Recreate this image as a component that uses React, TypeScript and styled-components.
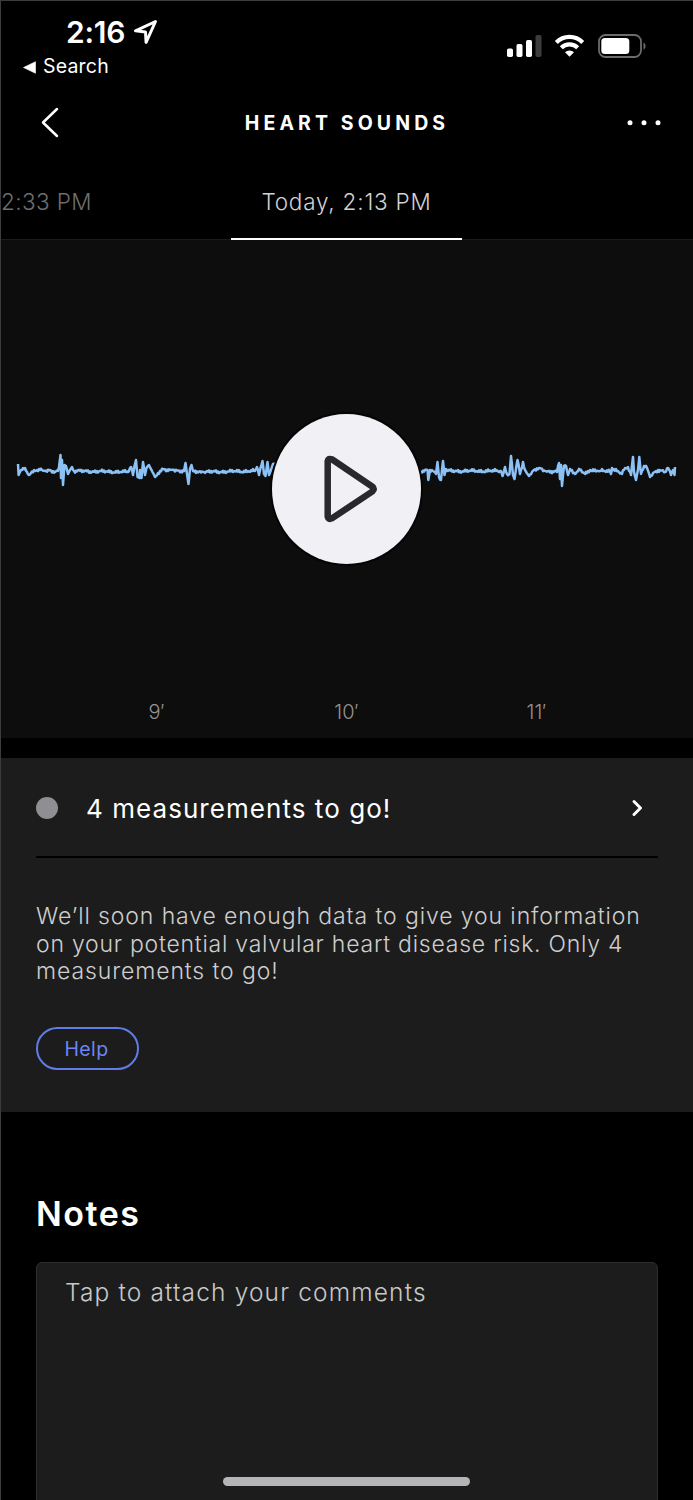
import React from "react";
import styled, { createGlobalStyle } from "styled-components";

const GlobalStyle = createGlobalStyle`
  * { box-sizing: border-box; }
  html, body { margin: 0; background: #000; }
  body { font-family: Inter, "Liberation Sans", sans-serif; overflow: hidden; }
  button { font: inherit; background: none; border: 0; padding: 0; cursor: pointer; }
`;

const Screen = styled.main`
  position: relative;
  width: 693px;
  height: 1500px;
  overflow: hidden;
  display: flex;
  flex-direction: column;
  background: #000;
  border-top: 1px solid #3c3c3c;
  border-left: 1px solid #3c3c3c;
  color: #fff;
`;

const Line = styled.span<{ $size: number; $weight?: number; $spacing?: number; $color?: string }>`
  display: block;
  margin: 0;
  white-space: nowrap;
  line-height: 1.2;
  font-size: ${(p) => p.$size}px;
  font-weight: ${(p) => p.$weight ?? 300};
  letter-spacing: ${(p) => p.$spacing ?? 0}px;
  color: ${(p) => p.$color ?? "#fff"};
`;

const StatusBar = styled.div`
  flex: none;
  height: 84px;
  display: flex;
  justify-content: space-between;
  padding: 13px 46px 0 22px;
`;

const Clock = styled.div`
  display: flex;
  align-items: center;
  gap: 8px;
  height: 36px;
  padding-left: 43px;
`;

const BackToApp = styled.div`
  display: flex;
  align-items: center;
  gap: 7px;
  height: 34px;
`;

const Indicators = styled.div`
  display: flex;
  height: 24px;
  margin-top: 20px;
`;

const Header = styled.header`
  flex: none;
  height: 76px;
  display: grid;
  grid-template-columns: 98px 1fr 98px;
  align-items: center;
  justify-items: center;
`;

const Title = styled(Line)`
  padding-top: 2px;
`;

const Tabs = styled.nav`
  flex: none;
  height: 79px;
  display: grid;
  grid-template-columns: 230px 231px 231px;
  border-bottom: 1px solid #1b1b1b;
`;

const Tab = styled.div<{ $active?: boolean }>`
  height: 79px;
  padding-top: 27px;
  display: flex;
  justify-content: ${(p) => (p.$active ? "center" : "flex-start")};
  border-bottom: 2px solid ${(p) => (p.$active ? "#fff" : "transparent")};
`;

const Player = styled.section`
  position: relative;
  flex: none;
  height: 498px;
  margin-bottom: 20px;
  background: #0d0d0d;
`;

const Wave = styled.svg`
  display: block;
  width: 692px;
  height: 460px;
`;

const PlayButton = styled.button`
  position: absolute;
  left: 271px;
  top: 174px;
  width: 149px;
  height: 150px;
  border-radius: 50%;
  background: #f1f0f5;
  box-shadow: 0 0 0 2px #050505;
`;

const TimeAxis = styled.div`
  display: grid;
  grid-template-columns: repeat(3, 190px);
  justify-content: center;
  justify-items: center;
  padding-right: 1px;
`;

const Card = styled.section`
  flex: none;
  height: 354px;
  padding: 0 35px;
  background: #1c1c1c;
`;

const CardRow = styled.div`
  height: 100px;
  padding-top: 2px;
  display: flex;
  align-items: center;
  border-bottom: 2px solid #000;
`;

const CardTitle = styled(Line)`
  padding-top: 2px;
`;

const Dot = styled.i`
  width: 22px;
  height: 22px;
  margin-right: 28px;
  border-radius: 50%;
  background: #8f8f93;
`;

const RowChevron = styled.svg`
  margin-left: auto;
  margin-right: 14px;
`;

const Message = styled.p`
  margin: 45px 0 0;
  font-size: 23px;
  font-weight: 300;
  line-height: 27.6px;
  color: #cecece;
  white-space: nowrap;
`;

const MessageLine = styled.span<{ $spacing: number }>`
  display: block;
  letter-spacing: ${(p) => p.$spacing}px;
`;

const HelpButton = styled.button`
  margin-top: 41px;
  width: 103px;
  height: 43px;
  display: flex;
  align-items: center;
  justify-content: center;
  padding: 2px 2px 0 0;
  border: 2px solid #5f7ce8;
  border-radius: 22px;
`;

const Notes = styled.section`
  flex: 1;
  padding: 82px 35px 0;
`;

const NotesField = styled.div`
  height: 260px;
  margin-top: 27px;
  padding: 15px 28px;
  border: 1px solid #2e2e2e;
  border-radius: 6px;
  background: #1c1c1c;
`;

const HomeIndicator = styled.div`
  position: absolute;
  left: 222px;
  top: 1476px;
  width: 247px;
  height: 9px;
  border-radius: 5px;
  background: #b5b5b8;
`;

const beats: [number, number][] = [
  [18, 464], [18.6, 475], [21, 470], [23, 468], [25, 468], [27, 472], [29, 475], [31, 473], [35, 471], [40, 470],
  [45, 471], [50, 470], [55, 472], [58, 471], [59, 467], [60.5, 455], [61, 478], [62, 460], [63, 485], [64.5, 465],
  [66, 466], [68, 474], [70, 470], [72, 467], [74, 471], [128, 472], [131, 467], [133, 475], [134.5, 466], [136, 460],
  [137.5, 477], [139.5, 478], [140, 470], [141.5, 478], [143, 462], [145, 475], [146.5, 468], [149, 465], [151.5, 470],
  [155, 477], [158, 473], [163, 469], [168, 471], [173, 470], [184, 471], [185.5, 463], [187, 474], [188.5, 484],
  [190, 469], [191.5, 465], [193, 471], [203, 472], [255, 471], [257, 467], [259, 475], [260.5, 468], [262.5, 461],
  [264, 474], [265.5, 476], [267.5, 462], [269, 475], [271, 470], [273, 464], [280, 471], [421, 472], [425, 470],
  [427.5, 470], [428.3, 480], [430, 470], [433, 471], [436, 474], [437.5, 462], [439, 477], [441, 480], [443, 461],
  [444.5, 475], [446, 469], [448, 471], [501, 471], [502.5, 476], [505, 467], [507, 474], [509.5, 474], [511, 456],
  [513, 475], [514.5, 479], [517.5, 460], [520, 474], [523, 462], [525, 470], [529, 476], [532, 472], [539, 468],
  [545, 471], [557, 472], [559, 463], [560, 479], [561, 465], [562, 486], [564, 466], [566, 466], [568, 475],
  [570, 469], [575, 474], [580, 470], [585, 474], [590, 470], [600, 471], [610, 471], [611, 474], [612, 468],
  [622, 474], [624, 470], [628, 467], [631, 475], [633, 457], [634, 472], [636, 480], [638, 470], [639.3, 457],
  [641, 474], [644, 466], [647, 468], [650, 477], [653, 473], [658, 470], [665, 472], [668, 468], [671, 475],
  [673, 470], [674.5, 475], [675, 467],
];

const ripple = (x: number) =>
  Math.sin(x * 2.7) * 0.9 + Math.sin(x * 0.83 + 2) * 0.6 + Math.sin(x * 0.29) * 0.5;

const wavePath = (() => {
  const out: string[] = [];
  beats.forEach(([x, y], i) => {
    out.push(`${x - 1} ${y - 240}`);
    const next = beats[i + 1];
    if (!next) return;
    for (let t = x + 1; t < next[0] - 0.8; t += 1) {
      const v = y + ((next[1] - y) * (t - x)) / (next[0] - x);
      out.push(`${t - 1} ${(v - 240 + ripple(t)).toFixed(2)}`);
    }
  });
  return `M${out.join("L")}`;
})();

export default function App() {
  return (
    <>
      <GlobalStyle />
      <Screen>
        <StatusBar>
          <div>
            <Clock>
              <Line $size={30} $weight={600} $spacing={-0.2}>2:16</Line>
              <svg width="25" height="26" viewBox="0 0 25 26" fill="none" stroke="#fff" strokeWidth="3" strokeLinejoin="round">
                <path d="M22.5 2.5 2.5 11.8l10 1.3.6 10.2z" />
              </svg>
            </Clock>
            <BackToApp>
              <svg width="13" height="13" viewBox="0 0 13 13" fill="#fff">
                <path d="M12.5.7v11.6L.5 6.5z" stroke="#fff" strokeLinejoin="round" strokeWidth="0.6" />
              </svg>
              <Line $size={19.5} $weight={400} $spacing={0.2}>Search</Line>
            </BackToApp>
          </div>
          <Indicators>
            <svg width="141" height="26" viewBox="0 0 141 26" fill="none">
              <g fill="#fff">
                <rect x="1" y="14.5" width="6" height="8.5" rx="1.7" />
                <rect x="10.5" y="10" width="6" height="13" rx="1.7" />
                <rect x="20" y="6" width="6" height="17" rx="1.7" />
              </g>
              <rect x="29.5" y="1" width="6" height="22" rx="1.7" fill="#3c3c3d" />
              <g stroke="#fff" strokeWidth="4.2">
                <path d="M50.3 8.5a18.5 18.5 0 0 1 26.4 0" />
                <path d="M55.3 13.8a11.6 11.6 0 0 1 16.4 0" />
              </g>
              <path d="M63.5 22.8 59 18.2a6.5 6.5 0 0 1 9 0z" fill="#fff" />
              <rect x="93" y="1" width="42" height="22" rx="6.5" stroke="#6c6c6c" strokeWidth="1.8" />
              <rect x="95.3" y="4" width="28" height="16" rx="3.5" fill="#fff" />
              <path d="M137.5 8.5c2.7 1.2 2.7 6 0 7.2z" fill="#6c6c6c" />
            </svg>
          </Indicators>
        </StatusBar>

        <Header>
          <svg width="20" height="32" viewBox="0 0 20 32" fill="none" stroke="#fff" strokeWidth="2.5" strokeLinecap="round" strokeLinejoin="round">
            <path d="M17 2 3 15.5 17 29" />
          </svg>
          <Title $size={19.5} $weight={700} $spacing={4.1}>HEART SOUNDS</Title>
          <svg width="36" height="6" viewBox="0 0 36 6" fill="#fff">
            <circle cx="4" cy="2.7" r="2.5" />
            <circle cx="18" cy="2.7" r="2.5" />
            <circle cx="32" cy="2.7" r="2.5" />
          </svg>
        </Header>

        <Tabs>
          <Tab>
            <Line $size={22.5} $spacing={0.4} $color="#6e6e6e">2:33 PM</Line>
          </Tab>
          <Tab $active>
            <Line $size={22.5} $spacing={0.8} $color="#d2d2d2">Today, 2:13 PM</Line>
          </Tab>
        </Tabs>

        <Player>
          <Wave viewBox="0 0 692 460" fill="none">
            <path d={wavePath} stroke="#8cc1f5" strokeWidth="2.5" strokeLinejoin="round" />
          </Wave>
          <PlayButton aria-label="Play">
            <svg width="149" height="150" viewBox="0 0 149 150" fill="none" stroke="#29292b" strokeWidth="6.5" strokeLinejoin="round">
              <path d="M55.7 47.2v55.5q.6 3.3 4.2 1.7L100.5 77.4q2.6-2.3 0-4.6L59.9 45.3q-3.6-1.4-4.2 1.9z" />
            </svg>
          </PlayButton>
          <TimeAxis>
            <Line $size={20} $color="#929292">9′</Line>
            <Line $size={20} $color="#929292">10′</Line>
            <Line $size={20} $color="#929292">11′</Line>
          </TimeAxis>
        </Player>

        <Card>
          <CardRow>
            <Dot />
            <CardTitle $size={26} $weight={400} $spacing={1.05}>4 measurements to go!</CardTitle>
            <RowChevron width="14" height="20" viewBox="0 0 14 20" fill="none" stroke="#fff" strokeWidth="3" strokeLinecap="round" strokeLinejoin="round">
              <path d="m4 3.5 6.5 6.5L4 16.5" />
            </RowChevron>
          </CardRow>
          <Message>
            <MessageLine $spacing={0.9}>We’ll soon have enough data to give you information</MessageLine>
            <MessageLine $spacing={0.76}>on your potential valvular heart disease risk. Only 4</MessageLine>
            <MessageLine $spacing={0.9}>measurements to go!</MessageLine>
          </Message>
          <HelpButton>
            <Line $size={19.5} $weight={400} $spacing={0.4} $color="#6a86f0">Help</Line>
          </HelpButton>
        </Card>

        <Notes>
          <Line as="h2" $size={34} $weight={600} $spacing={1.5}>Notes</Line>
          <NotesField>
            <Line $size={24.5} $spacing={1.15} $color="#c8c8c8">Tap to attach your comments</Line>
          </NotesField>
        </Notes>
        <HomeIndicator />
      </Screen>
    </>
  );
}
